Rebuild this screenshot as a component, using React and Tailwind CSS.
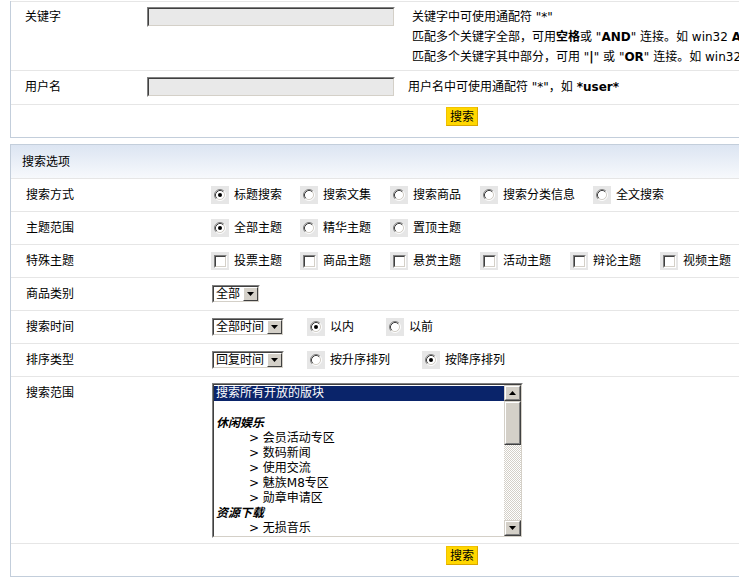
const Radio = ({ checked }) => (
  <span className="w-[18px] h-[18px] bg-[#e6e6e6] flex items-center justify-center shrink-0">
    <svg width="12" height="12" viewBox="0 0 12 12">
      <circle cx="6" cy="6" r="4.5" fill="#fff" />
      <path d="M2.11 9.89 A5.5 5.5 0 0 1 9.89 2.11" fill="none" stroke="#808080" strokeWidth="1" />
      <path d="M9.89 2.11 A5.5 5.5 0 0 1 2.11 9.89" fill="none" stroke="#ffffff" strokeWidth="1" />
      <path d="M2.82 9.18 A4.5 4.5 0 0 1 9.18 2.82" fill="none" stroke="#404040" strokeWidth="1" />
      <path d="M9.18 2.82 A4.5 4.5 0 0 1 2.82 9.18" fill="none" stroke="#d4d0c8" strokeWidth="1" />
      {checked && <circle cx="6" cy="6" r="2" fill="#000" />}
    </svg>
  </span>
);

const Checkbox = () => (
  <span className="w-[18px] h-[18px] bg-[#e6e6e6] flex items-center justify-center shrink-0">
    <span className="w-[13px] h-[13px] border border-t-[#808080] border-l-[#808080] border-b-white border-r-white">
      <span className="block w-full h-full bg-white border border-t-[#404040] border-l-[#404040] border-b-[#d4d0c8] border-r-[#d4d0c8]" />
    </span>
  </span>
);

const Option = ({ type, checked, label, w }) => (
  <label className={`flex items-center shrink-0 ${w}`}>
    {type === 'radio' ? <Radio checked={checked} /> : <Checkbox />}
    <span className="ml-[5px] whitespace-nowrap">{label}</span>
  </label>
);

const Triangle = () => (
  <svg width="7" height="4" viewBox="0 0 7 4">
    <path d="M0 0 H7 L3.5 4 Z" fill="#000" />
  </svg>
);

const Select = ({ text, w }) => (
  <div className={`${w} h-[18px] border border-t-[#808080] border-l-[#808080] border-b-white border-r-white`}>
    <div className="h-full bg-white flex items-center border border-t-[#404040] border-l-[#404040] border-b-[#d4d0c8] border-r-[#d4d0c8]">
      <span className="pl-[2px] flex-1 leading-[14px] whitespace-nowrap">{text}</span>
      <span className="w-[15px] h-[14px] bg-[#d4d0c8] border border-t-white border-l-white border-b-[#404040] border-r-[#404040] flex items-center justify-center">
        <Triangle />
      </span>
    </div>
  </div>
);

const SearchButton = () => (
  <button className="h-[19px] w-[32px] bg-[#ffd700] border border-[#f2c200] border-b-[#d9a600] border-r-[#d9a600] text-[12px] leading-[16px] text-black">
    搜索
  </button>
);

const Input = () => (
  <div className="w-[248px] h-[20px] border border-t-[#808080] border-l-[#808080] border-b-white border-r-white shrink-0">
    <div className="h-full bg-[#e9e9e9] border border-t-[#404040] border-l-[#404040] border-b-[#d4d0c8] border-r-[#d4d0c8]" />
  </div>
);

const Row = ({ label, children }) => (
  <div className="border-t border-[#e6e6e6] h-[33px] flex items-center">
    <div className="w-[200px] pl-[15px] shrink-0">{label}</div>
    {children}
  </div>
);

const forums = [
  { t: '搜索所有开放的版块', sel: true },
  { t: '' },
  { t: '休闲娱乐', group: true },
  { t: '> 会员活动专区' },
  { t: '> 数码新闻' },
  { t: '> 使用交流' },
  { t: '> 魅族M8专区' },
  { t: '> 勋章申请区' },
  { t: '资源下载', group: true },
  { t: '> 无损音乐' },
];

const ScrollBtn = ({ up }) => (
  <div className="h-[16px] bg-[#d4d0c8] border border-t-[#d4d0c8] border-l-[#d4d0c8] border-b-[#404040] border-r-[#404040]">
    <div className="h-full border border-t-white border-l-white border-b-[#808080] border-r-[#808080] flex items-center justify-center">
      <svg width="7" height="4" viewBox="0 0 7 4" className={up ? 'rotate-180' : ''}>
        <path d="M0 0 H7 L3.5 4 Z" fill="#000" />
      </svg>
    </div>
  </div>
);

const ListBox = () => (
  <div className="w-[311px] h-[155px] border border-t-[#808080] border-l-[#808080] border-b-white border-r-white">
    <div className="h-full bg-white flex border border-t-[#404040] border-l-[#404040] border-b-[#d4d0c8] border-r-[#d4d0c8] overflow-hidden">
      <div className="flex-1 leading-[15px] pt-px">
        {forums.map((f, i) => (
          <div
            key={i}
            className={`h-[15px] whitespace-nowrap ${
              f.sel ? 'bg-[#0a246a] text-white pl-[2px]' : f.group ? 'pl-[2px] font-bold italic' : 'pl-[35px]'
            }`}
          >
            {f.t}
          </div>
        ))}
      </div>
      <div className="w-[17px] flex flex-col shrink-0">
        <ScrollBtn up />
        <div className="h-[44px] bg-[#d4d0c8] border border-t-[#d4d0c8] border-l-[#d4d0c8] border-b-[#404040] border-r-[#404040]">
          <div className="h-full border border-t-white border-l-white border-b-[#808080] border-r-[#808080]" />
        </div>
        <div className="flex-1 bg-[repeating-conic-gradient(#d4d0c8_0_25%,#ffffff_0_50%)] bg-[length:2px_2px]" />
        <ScrollBtn />
      </div>
    </div>
  </div>
);

export default function App() {
  return (
    <div className='w-[739px] h-[578px] overflow-hidden bg-white text-black text-[12px] font-[family-name:"DejaVu_Sans","Noto_Sans_CJK_SC",sans-serif]'>
      <div className="w-[960px]">
        {/* 基本搜索 */}
        <div className="ml-[10px] border-l border-b border-[#c3cedb]">
          <div className="mt-px border-t border-[#e6e6e6] flex pt-[5px] pb-[3px]">
            <div className="w-[136px] pl-[14px] leading-[20px] shrink-0">关键字</div>
            <Input />
            <div className="ml-[17px] leading-[20px] whitespace-nowrap">
              <div>关键字中可使用通配符 "*"</div>
              <div>
                匹配多个关键字全部，可用<b>空格</b>或 "<b>AND</b>" 连接。如 win32 <b>AND</b> unix
              </div>
              <div>
                匹配多个关键字其中部分，可用 "<b>|</b>" 或 "<b>OR</b>" 连接。如 win32 <b>OR</b> unix
              </div>
            </div>
          </div>
          <div className="border-t border-[#e6e6e6] flex items-center pt-[6px] pb-[7px]">
            <div className="w-[136px] pl-[14px] leading-[20px] shrink-0">用户名</div>
            <Input />
            <div className="ml-[13px] whitespace-nowrap">
              用户名中可使用通配符 "*"，如 <b>*user*</b>
            </div>
          </div>
          <div className="border-t border-[#e6e6e6] h-[33px] pt-[2px] pl-[435px]">
            <SearchButton />
          </div>
        </div>

        {/* 搜索选项 */}
        <div className="mt-[6px] ml-[10px] border-l border-t border-b border-[#c3cedb]">
          <div className="h-[33px] flex items-center pl-[11px] bg-gradient-to-b from-[#dce5f2] to-[#f7f9fc]">
            搜索选项
          </div>
          <Row label="搜索方式">
            <Option type="radio" checked label="标题搜索" w="w-[89px]" />
            <Option type="radio" label="搜索文集" w="w-[90px]" />
            <Option type="radio" label="搜索商品" w="w-[90px]" />
            <Option type="radio" label="搜索分类信息" w="w-[113px]" />
            <Option type="radio" label="全文搜索" w="w-[90px]" />
          </Row>
          <Row label="主题范围">
            <Option type="radio" checked label="全部主题" w="w-[89px]" />
            <Option type="radio" label="精华主题" w="w-[90px]" />
            <Option type="radio" label="置顶主题" w="w-[90px]" />
          </Row>
          <Row label="特殊主题">
            <Option type="checkbox" label="投票主题" w="w-[89px]" />
            <Option type="checkbox" label="商品主题" w="w-[90px]" />
            <Option type="checkbox" label="悬赏主题" w="w-[90px]" />
            <Option type="checkbox" label="活动主题" w="w-[90px]" />
            <Option type="checkbox" label="辩论主题" w="w-[90px]" />
            <Option type="checkbox" label="视频主题" w="w-[90px]" />
          </Row>
          <Row label="商品类别">
            <div className="ml-px">
              <Select text="全部" w="w-[48px]" />
            </div>
          </Row>
          <Row label="搜索时间">
            <div className="ml-px w-[95px]">
              <Select text="全部时间" w="w-[72px]" />
            </div>
            <Option type="radio" checked label="以内" w="w-[79px]" />
            <Option type="radio" label="以前" w="w-[90px]" />
          </Row>
          <Row label="排序类型">
            <div className="ml-px w-[95px]">
              <Select text="回复时间" w="w-[72px]" />
            </div>
            <Option type="radio" label="按升序排列" w="w-[115px]" />
            <Option type="radio" checked label="按降序排列" w="w-[115px]" />
          </Row>
          <div className="border-t border-[#e6e6e6] flex pt-[6px] pb-[5px]">
            <div className="w-[200px] pl-[15px] shrink-0 leading-[20px]">搜索范围</div>
            <div className="ml-px">
              <ListBox />
            </div>
          </div>
          <div className="border-t border-[#e6e6e6] h-[33px] pt-[2px] pl-[435px]">
            <SearchButton />
          </div>
        </div>
      </div>
    </div>
  );
}
